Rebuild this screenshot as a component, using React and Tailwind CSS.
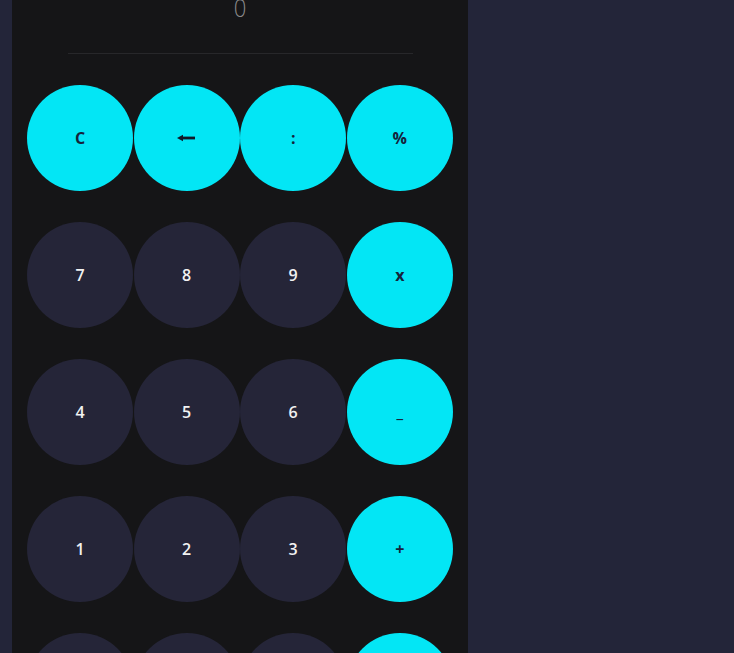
import React from 'react';

const keys = [
  { label: 'C', accent: true },
  { label: 'back', accent: true },
  { label: ':', accent: true },
  { label: '%', accent: true },
  { label: '7' },
  { label: '8' },
  { label: '9' },
  { label: 'x', accent: true },
  { label: '4' },
  { label: '5' },
  { label: '6' },
  { label: '_', accent: true },
  { label: '1' },
  { label: '2' },
  { label: '3' },
  { label: '+', accent: true },
  { label: '0' },
  { label: '.' },
  { label: '=' },
  { label: '=', accent: true },
];

function BackArrow() {
  return (
    <svg width="18" height="8" viewBox="0 0 18 8" className="ml-[-2px]">
      <path d="M0 4 L6 0.8 L6 7.2 Z" fill="#111827" />
      <rect x="5" y="2.6" width="13" height="2.8" fill="#111827" />
    </svg>
  );
}

export default function App() {
  return (
    <div className="h-screen overflow-hidden bg-[#232539] font-['Open_Sans',sans-serif]">
      <div className="ml-3 w-[456px] min-h-screen bg-[#151517]">
        <p className="-mt-[6px] text-center text-[26px] leading-[26px] font-light text-[#8a8a8a] scale-x-[0.85]">0</p>
        <div className="mt-[33px] ml-[56px] w-[345px] h-px bg-[#27272a]" />
        <div className="mt-[31px] pl-[15px] grid grid-cols-[repeat(4,106px)] gap-x-[0.6px] gap-y-[31px]">
          {keys.map((k, i) => (
            <button
              key={i}
              className={
                k.accent
                  ? 'w-[106px] h-[106px] rounded-full bg-[#03e6f5] text-[#15223a] text-[16px] font-bold flex items-center justify-center'
                  : 'w-[106px] h-[106px] rounded-full bg-[#252538] text-[#f1f1f1] text-[16px] font-semibold flex items-center justify-center'
              }
            >
              {k.label === 'back' ? <BackArrow /> : k.label}
            </button>
          ))}
        </div>
      </div>
    </div>
  );
}
